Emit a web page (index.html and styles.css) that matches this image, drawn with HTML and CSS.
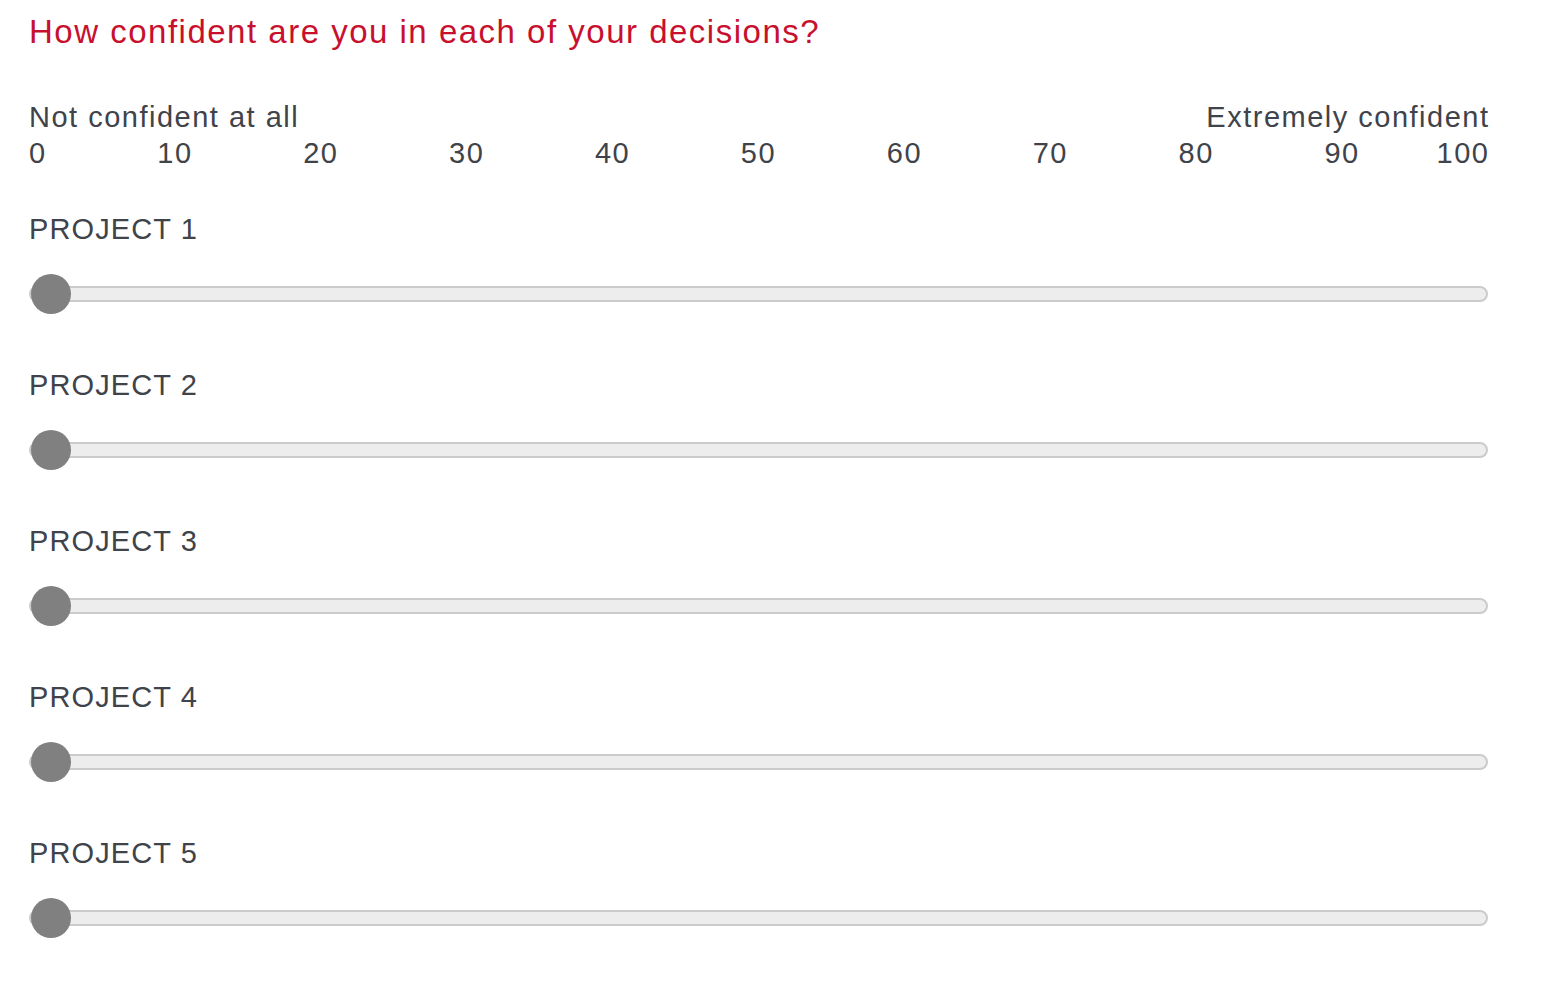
FILE: index.html
```html
<!DOCTYPE html>
<html>
<head>
<meta charset="utf-8">
<link rel="stylesheet" href="styles.css">
</head>
<body>
<div class="survey">
  <h1 class="question">How confident are you in each of your decisions?</h1>
  <div class="scale">
    <div class="anchors">
      <span>Not confident at all</span>
      <span>Extremely confident</span>
    </div>
    <div class="ticks">
      <span class="first">0</span><span>10</span><span>20</span><span>30</span><span>40</span><span>50</span><span>60</span><span>70</span><span>80</span><span>90</span><span class="last">100</span>
    </div>
  </div>
  <div class="rows">
    <div class="row"><div class="label">PROJECT 1</div><div class="track"><div class="thumb"></div></div></div>
    <div class="row"><div class="label">PROJECT 2</div><div class="track"><div class="thumb"></div></div></div>
    <div class="row"><div class="label">PROJECT 3</div><div class="track"><div class="thumb"></div></div></div>
    <div class="row"><div class="label">PROJECT 4</div><div class="track"><div class="thumb"></div></div></div>
    <div class="row"><div class="label">PROJECT 5</div><div class="track"><div class="thumb"></div></div></div>
  </div>
</div>
</body>
</html>
```
FILE: styles.css
```css
html, body {
  margin: 0;
  padding: 0;
  background: #ffffff;
}
body {
  font-family: "Liberation Sans", Arial, Helvetica, sans-serif;
  color: #404349;
  min-height: 982px;
}
.survey {
  width: 1459px;
  padding: 12px 0 40px 29px;
}
.question {
  margin: 0;
  font-size: 33px;
  font-weight: normal;
  line-height: 40px;
  letter-spacing: 1.5px;
  color: #c8102e;
}
.scale {
  margin-top: 47px;
  font-size: 29px;
  line-height: 36px;
  letter-spacing: 1.5px;
}
.anchors {
  display: flex;
  justify-content: space-between;
}
.anchors span:last-child {
  margin-right: -1.5px;
}
.ticks {
  display: grid;
  grid-template-columns: 0.5fr repeat(9, 1fr) 0.5fr;
}
.ticks span {
  white-space: nowrap;
  display: flex;
  justify-content: center;
}
.ticks .first { justify-content: flex-start; }
.ticks .last { justify-content: flex-end; margin-right: -1.5px; }
.rows {
  margin-top: 40px;
  display: flex;
  flex-direction: column;
  gap: 65px;
}
.row {
  display: flex;
  flex-direction: column;
  gap: 39px;
}
.label {
  font-size: 29px;
  line-height: 36px;
  letter-spacing: 1.1px;
}
.track {
  position: relative;
  height: 12px;
  border: 2px solid #cbcbcb;
  border-radius: 8px;
  background: #ededed;
}
.thumb {
  position: absolute;
  left: 0;
  top: 50%;
  width: 40px;
  height: 40px;
  margin-top: -20px;
  border-radius: 50%;
  background: #808080;
}
```
